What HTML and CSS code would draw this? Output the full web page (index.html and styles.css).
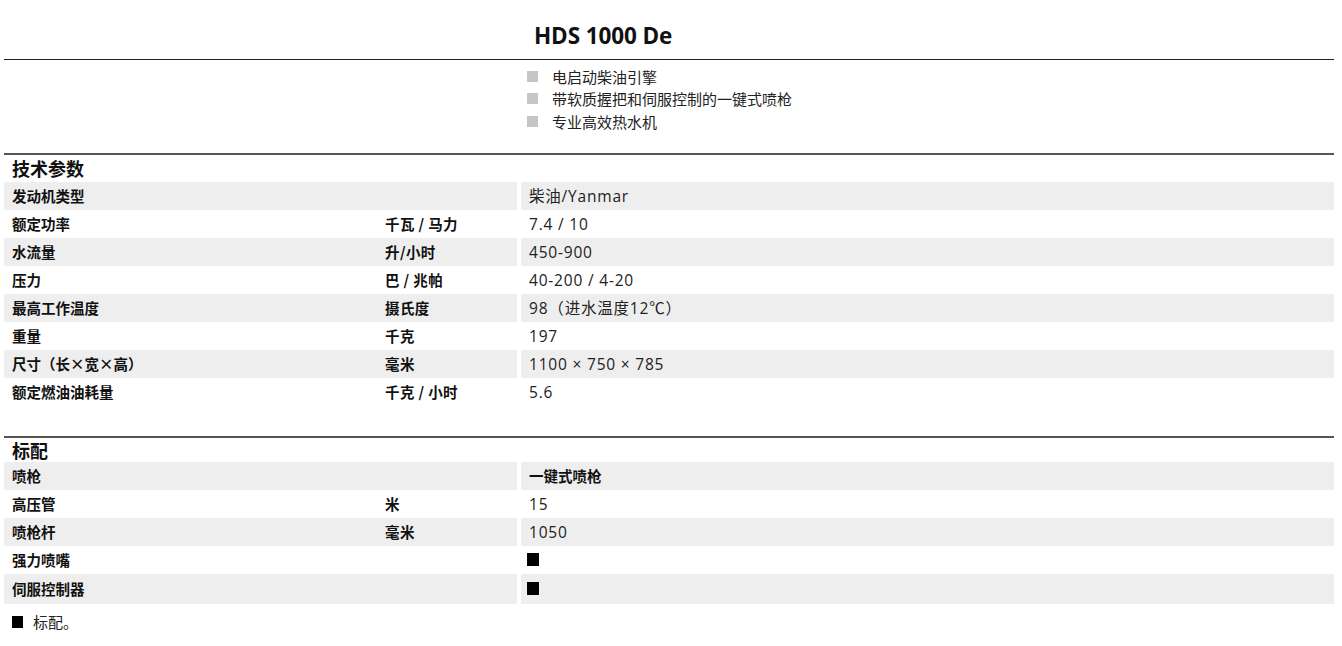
FILE: index.html
```html
<!DOCTYPE html>
<html lang="zh">
<head>
<meta charset="utf-8">
<title>HDS 1000 De</title>
<link rel="stylesheet" href="styles.css">
</head>
<body>
<div class="page">
  <header class="head">
    <h1 class="title">HDS 1000 De</h1>
  </header>
  <ul class="features">
    <li><span class="bullet"></span>电启动柴油引擎</li>
    <li><span class="bullet"></span>带软质握把和伺服控制的一键式喷枪</li>
    <li><span class="bullet"></span>专业高效热水机</li>
  </ul>

  <section class="section">
    <h2 class="sec-title">技术参数</h2>
    <div class="row gray"><div class="lab">发动机类型</div><div class="unit"></div><div class="val">柴油/Yanmar</div></div>
    <div class="row"><div class="lab">额定功率</div><div class="unit">千瓦 / 马力</div><div class="val">7.4 / 10</div></div>
    <div class="row gray"><div class="lab">水流量</div><div class="unit">升/小时</div><div class="val">450-900</div></div>
    <div class="row"><div class="lab">压力</div><div class="unit">巴 / 兆帕</div><div class="val">40-200 / 4-20</div></div>
    <div class="row gray"><div class="lab">最高工作温度</div><div class="unit">摄氏度</div><div class="val">98（进水温度12℃）</div></div>
    <div class="row"><div class="lab">重量</div><div class="unit">千克</div><div class="val">197</div></div>
    <div class="row gray"><div class="lab">尺寸（长×宽×高）</div><div class="unit">毫米</div><div class="val">1100 × 750 × 785</div></div>
    <div class="row"><div class="lab">额定燃油油耗量</div><div class="unit">千克 / 小时</div><div class="val">5.6</div></div>
  </section>

  <section class="section second">
    <h2 class="sec-title">标配</h2>
    <div class="row gray"><div class="lab">喷枪</div><div class="unit"></div><div class="val strong">一键式喷枪</div></div>
    <div class="row"><div class="lab">高压管</div><div class="unit">米</div><div class="val">15</div></div>
    <div class="row gray"><div class="lab">喷枪杆</div><div class="unit">毫米</div><div class="val">1050</div></div>
    <div class="row"><div class="lab">强力喷嘴</div><div class="unit"></div><div class="val"><span class="box"></span></div></div>
    <div class="row gray tall"><div class="lab">伺服控制器</div><div class="unit"></div><div class="val"><span class="box"></span></div></div>
  </section>

  <p class="legend"><span class="box small"></span>标配。</p>
</div>
</body>
</html>
```

FILE: styles.css
```css
* { box-sizing: border-box; }
html, body { margin: 0; padding: 0; background: #fff; }
body {
  font-family: "Open Sans", "Noto Sans CJK SC", sans-serif;
  color: #111;
}
.page {
  padding: 0 8px 0 4px;
}
.head {
  height: 60px;
  border-bottom: 1px solid #222;
  display: flex;
  align-items: center;
  padding-left: 530px;
  padding-top: 14px;
}
.title {
  margin: 0;
  font-family: "Open Sans", "Noto Sans CJK SC", sans-serif;
  font-weight: 700;
  font-size: 22.5px;
  letter-spacing: -0.1px;
  line-height: 1;
  color: #111;
}
.features {
  list-style: none;
  margin: 0;
  padding: 5px 0 20px 523px;
}
.features li {
  display: flex;
  align-items: center;
  height: 22.5px;
  font-family: "Noto Sans CJK SC", sans-serif;
  font-size: 15px;
  color: #222;
}
.bullet {
  display: inline-block;
  width: 11px;
  height: 11px;
  background: #c6c6c6;
  margin-right: 14px;
}
.section {
  border-top: 2px solid #555;
}
.second {
  margin-top: 30px;
}
.sec-title {
  margin: 0;
  height: 27px;
  display: flex;
  align-items: center;
  padding-left: 8px;
  font-family: "Noto Sans CJK SC", sans-serif;
  font-weight: 700;
  font-size: 18px;
  color: #111;
}
.second .sec-title { height: 24px; }
.row {
  display: grid;
  grid-template-columns: 373px 140px 1fr;
  height: 28px;
}
.row.tall { height: 30px; }
.row > div {
  display: flex;
  align-items: center;
  padding-left: 8px;
}
.row .val { margin-left: 4px; }
.row.gray .lab, .row.gray .unit, .row.gray .val { background: #eeeeee; }
.lab, .unit {
  font-family: "Noto Sans CJK SC", sans-serif;
  font-weight: 700;
  font-size: 14.5px;
  color: #111;
}
.unit { letter-spacing: 0.4px; }
.val {
  font-family: "Open Sans", "Noto Sans CJK SC", sans-serif;
  font-size: 15.5px;
  font-weight: 400;
  letter-spacing: 0.8px;
  color: #222;
}
.val.strong {
  font-family: "Noto Sans CJK SC", sans-serif;
  font-weight: 700;
  font-size: 14.5px;
  letter-spacing: 0;
  color: #111;
}
.box {
  display: inline-block;
  width: 12px;
  height: 13px;
  background: #000;
  margin-left: -2px;
}
.legend {
  margin: 0;
  height: 36px;
  display: flex;
  align-items: center;
  padding-left: 8px;
  font-family: "Noto Sans CJK SC", sans-serif;
  font-size: 15px;
  color: #222;
}
.box.small {
  width: 11px;
  height: 12px;
  margin: 0 10px 0 0;
}
```
